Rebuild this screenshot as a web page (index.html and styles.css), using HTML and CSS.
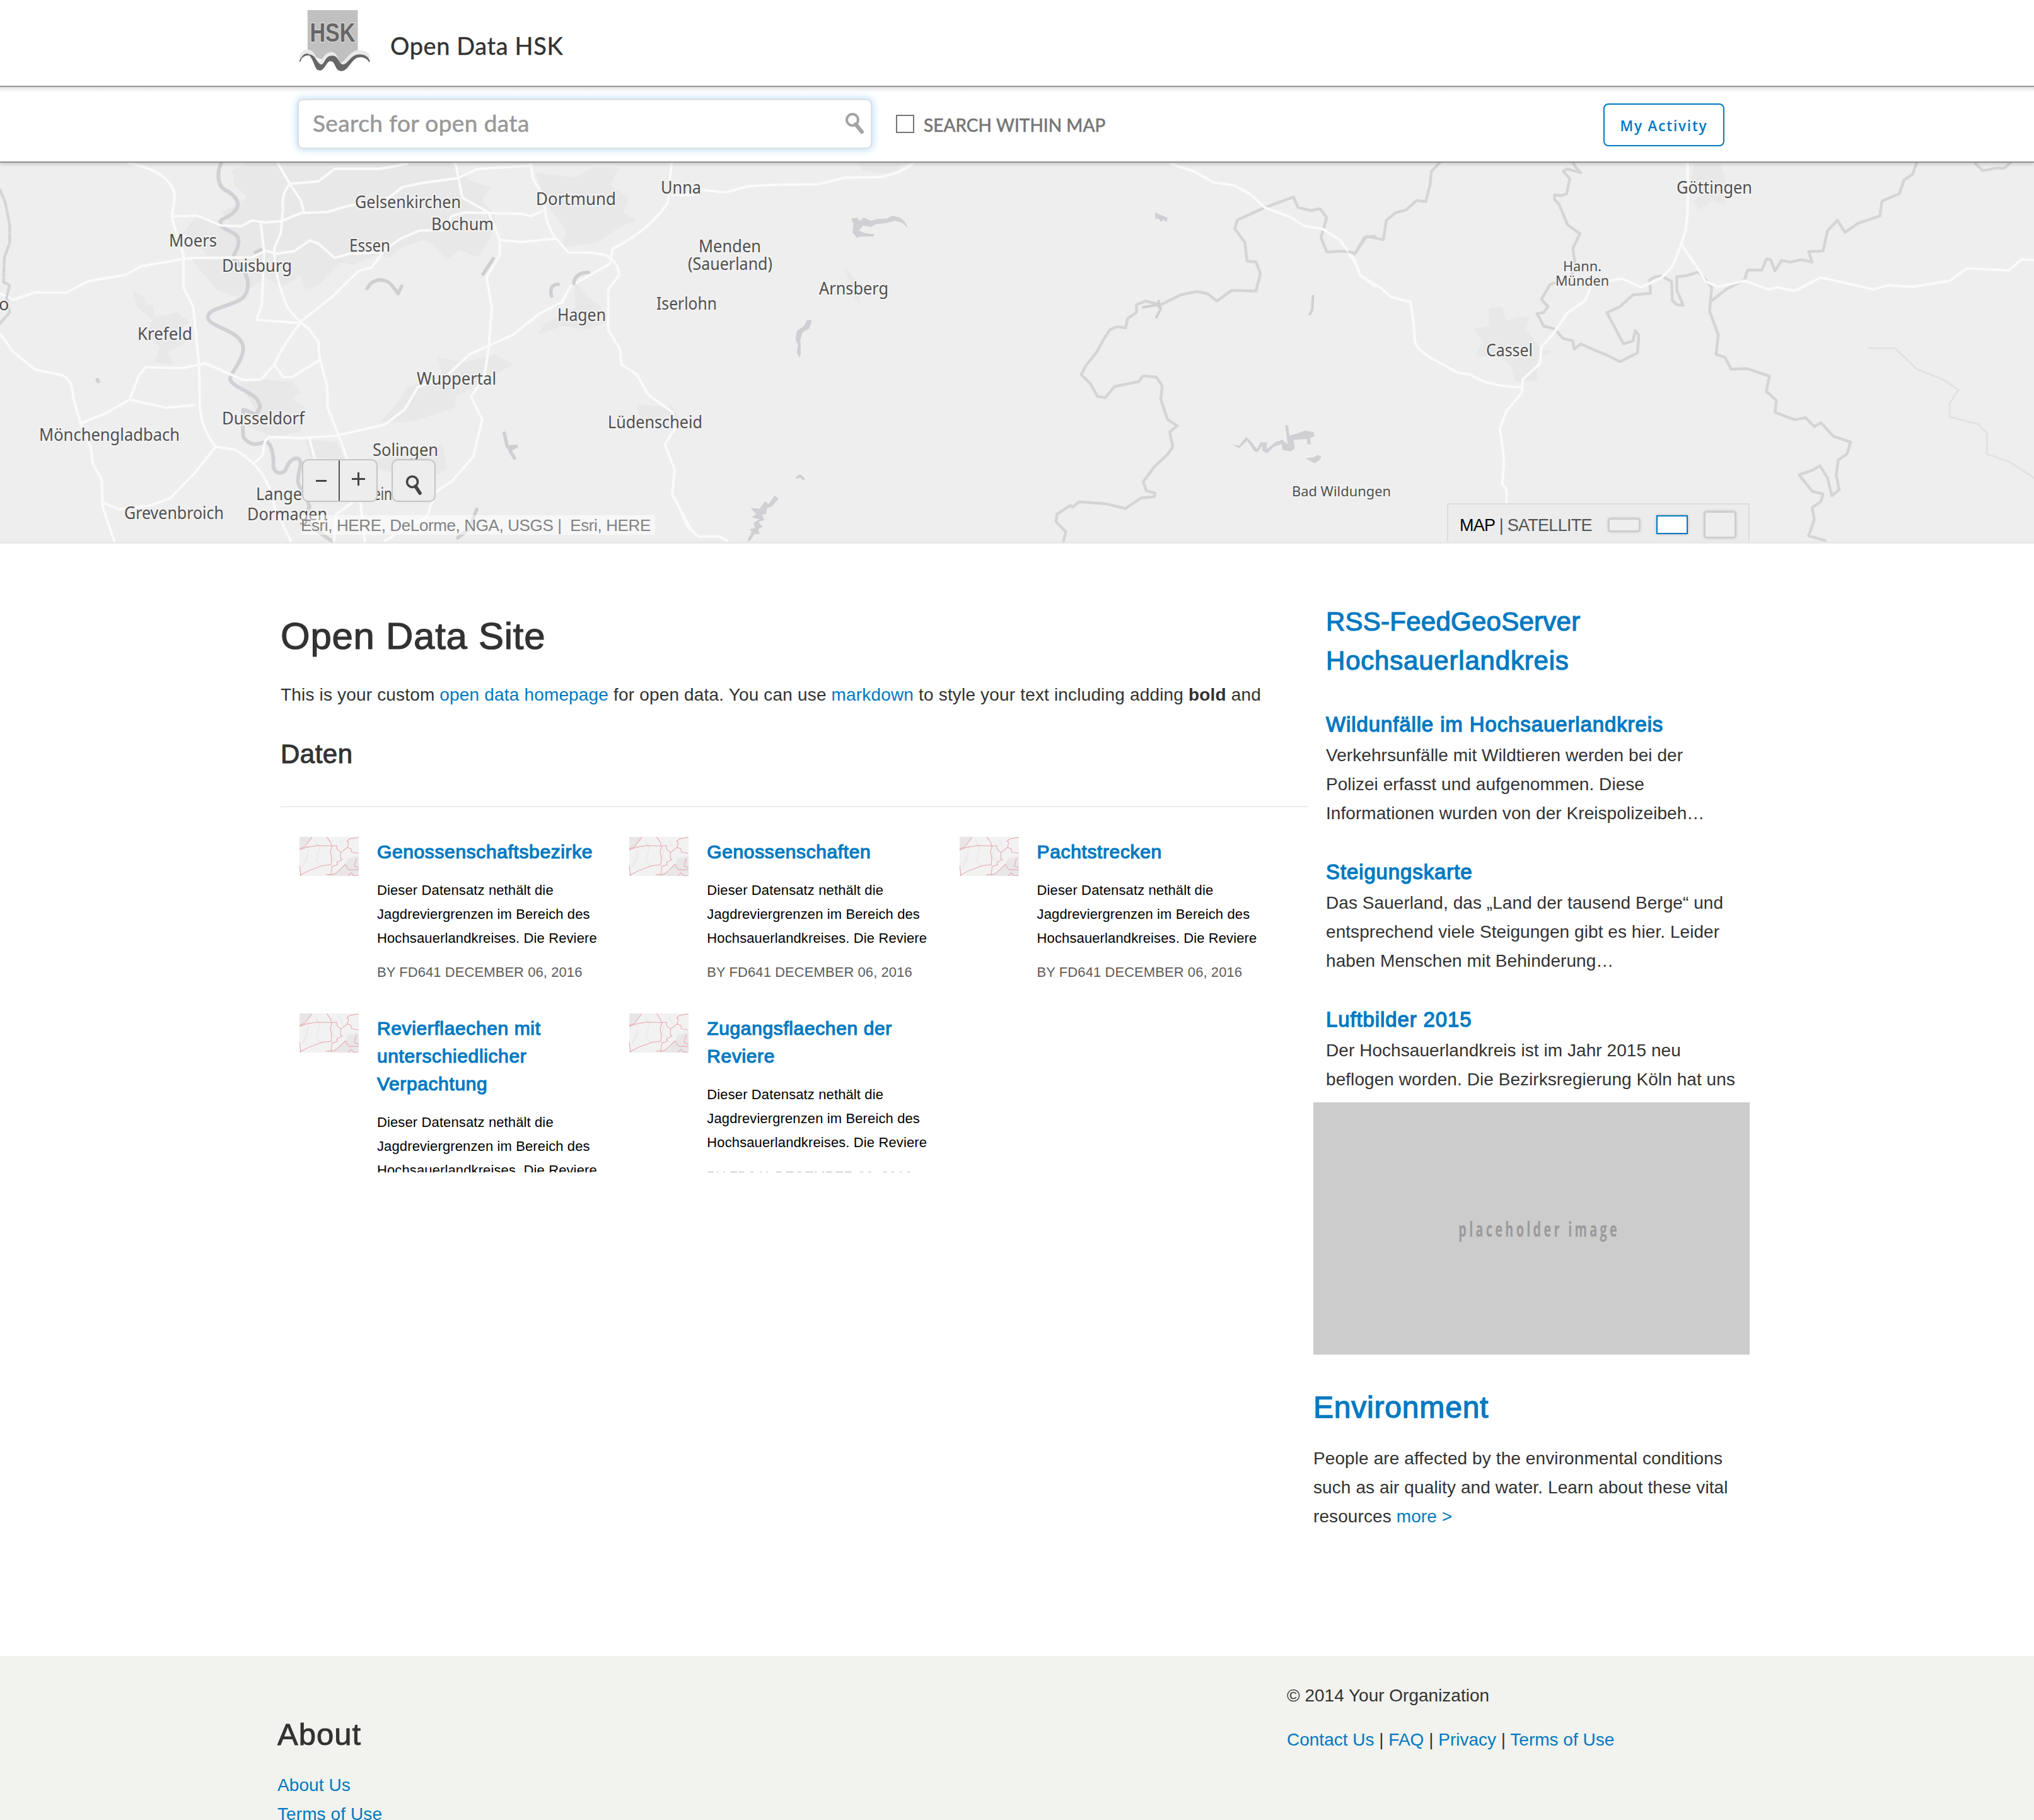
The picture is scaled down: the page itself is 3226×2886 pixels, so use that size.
FILE: index.html
```html
<!DOCTYPE html>
<html lang="en">
<head>
<meta charset="utf-8">
<title>Open Data HSK</title>
<link rel="stylesheet" href="styles.css">
</head>
<body>
<svg class="defs" aria-hidden="true">
  <symbol id="thumb" viewBox="46 48 280 185" preserveAspectRatio="none">
    <rect x="46" y="48" width="280" height="185" fill="#f3f2f2"/>
    <path d="M46 48H105L60 100L46 110ZM275 150L326 140V233H170L230 215L262 180ZM60 200L80 150L95 130" fill="#e8e6e7"/>
    <path d="M120 60L140 100L125 160L150 190M90 90L80 140L60 190M210 100L200 150L225 160M235 60L250 100" fill="none" stroke="#e6e4e6" stroke-width="3"/>
    <path d="M46 110L80 97L130 89L195 91L222 90L222 105L241 122L272 98L278 75L270 68L285 57L326 50M175 48L193 75L199 95L192 120L198 150L195 181L155 184L90 208L48 230M46 105L70 95L105 50M241 122L240 150L248 156L222 168L226 180L200 188L195 225L170 227M195 228L215 222L240 200L262 178L275 200L285 205L300 203L326 205M272 98L290 105L292 120L326 126M315 150L305 185L326 195M275 233L290 218L300 230L326 233M46 180L52 233" fill="none" stroke="#e5a4aa" stroke-width="3"/>
  </symbol>
</svg>

<header class="site-header">
  <svg class="logo" viewBox="0 0 112 97">
    <path d="M12.8 0H92.5V72L66 84L40 80L12.8 70Z" fill="#c0c0c0"/>
    <path d="M2 76C7 64 15 64 20 70C26 78 25 86 31 86C38 86 40 71 50 70C60 70 57 87 65 87C74 87 82 66 95 67C103 67 107 70 110 76" fill="none" stroke="#e9e9e9" stroke-width="7"/>
    <path d="M0.5 82C5 69 13 66 19 75C25 84 25 96 33 95C41 94 41 80 50 80C58 80 56 97 67 96C79 95 82 73 97 74C104 74 108 77 111 82C110 76 105 71 96 71C80 71 78 87 69 87C61 87 62 72 51 73C40 73 41 88 34 87C27 86 25 70 15 71C7 71 1 76 0.5 82Z" fill="#666" stroke="#666" stroke-width="1.5"/>
    <text x="16.5" y="50" textLength="72" lengthAdjust="spacingAndGlyphs" class="logo-text">HSK</text>
  </svg>
  <span class="site-title">Open Data HSK</span>
</header>

<div class="search-bar">
  <div class="search-box"><span>Search for open data</span>
    <svg class="search-icon" viewBox="0 0 30 34"><circle cx="11" cy="11" r="9" fill="none" stroke="#a3a3a3" stroke-width="4"/><path d="M16 18L26 30" stroke="#a3a3a3" stroke-width="6" stroke-linecap="round"/></svg>
  </div>
  <span class="checkbox"></span>
  <span class="within">SEARCH WITHIN MAP</span>
  <a class="activity">My Activity</a>
</div>

<section class="map">
  <svg class="map-canvas" viewBox="0 258 3226 604" preserveAspectRatio="none">
    <!-- western part: Rhine and Ruhr -->
    <g transform="translate(0 250) scale(.70153 .3954)">
      <g class="urban">
        <path d="M525 50L560 22H1020L1060 90L1110 120L1090 170L1120 230L1110 320L1080 400L1040 370L1010 410L980 350L960 330L920 350L880 400L850 390L800 430L770 420L720 510L690 530L680 470L640 520L600 480L540 560L490 530L430 400L470 390L415 300L440 240L520 260L500 220L560 160L530 110Z"/>
        <path d="M1210 60L1300 80L1340 40L1400 40L1380 110L1420 160L1410 220L1440 250L1400 280L1350 340L1270 360L1280 290L1240 200Z"/>
        <path d="M300 530L325 560L330 590L345 590L350 640L400 620L430 660L400 700L420 740L380 780L390 830L350 820L360 760L330 700L345 650L310 600Z"/>
        <path d="M540 900L600 890L660 900L680 940L660 970L690 1000L680 1100L620 1120L560 1080L580 1020Z"/>
        <path d="M990 800L1050 820L1120 790L1160 830L1130 860L1080 880V910L1030 960V1000L930 1060L860 1060L900 980L920 920L1000 870Z"/>
        <path d="M1300 500L1330 560L1360 600L1350 640L1370 660L1330 690L1270 675L1215 710L1230 670L1300 600Z"/>
        <path d="M1440 990L1520 1000L1540 1060L1450 1080ZM690 1130L760 1140L780 1210L700 1200ZM820 1230L900 1180L1000 1150L1010 1250L960 1300Z"/>
      </g>
      <g class="river"><path d="M500 22C490 60 490 120 515 135C545 170 550 210 500 250C490 290 530 290 538 320C545 370 520 390 530 410C560 450 570 520 550 560C530 595 470 600 470 640C470 680 545 690 550 760C550 820 520 860 520 890C530 930 585 940 588 1000L580 1030L550 1010Q548 1080 550 1120C570 1170 590 1140 605 1140Q620 1170 618 1240Q625 1280 645 1255C655 1200 680 1190 680 1230C670 1300 670 1310 690 1350L700 1400C680 1450 710 1490 750 1537"/></g>
      <g class="roads">
        <path d="M290 22C350 40 395 90 395 160C392 200 385 230 395 280L415 390V520L437 600L450 830L452 1000C455 1080 475 1130 487 1160L530 1170C570 1210 610 1280 620 1400L657 1537"/>
        <path d="M0 545L30 570L80 540L150 542L200 495L285 470L320 435L410 408L440 402L570 400L600 372L625 385L665 375L700 332L720 345L757 402L790 385L860 380"/>
        <path d="M395 235L445 232L500 272L545 275L570 252L600 260L635 255L680 222L740 218L790 192L880 160L910 118L960 100L1035 82L1080 45L1200 32"/>
        <path d="M628 22L655 105L680 170L687 220M655 105L720 95L757 45L860 45L920 25"/>
        <path d="M655 105Q635 150 640 200L635 300L620 365Q620 480 650 600Q670 650 700 690L720 740L722 800L740 920V1000L765 1110L785 1210"/>
        <path d="M590 265L597 380L592 590L580 650L675 663L750 560L810 455L840 440L870 370L905 325L950 292L1010 290L1020 235L1050 220L1180 225L1200 235L1225 215"/>
        <path d="M680 660Q640 750 620 830L590 890L550 892L465 825L410 845L330 840L315 870L293 970L240 1025L183 1065M293 970L375 1003L440 992M620 830L640 880H660L720 815"/>
        <path d="M0 705L30 780L80 850L140 872Q165 890 165 960L183 1070L205 1160L210 1230L230 1290L232 1400L258 1537M487 1160L440 1265L385 1365L340 1395L270 1410L235 1385"/>
        <path d="M1030 22L1045 160L1105 220L1130 330V390L1100 480L1112 600L1105 760L1095 880L1065 960L1090 1050L1070 1200L1020 1300L985 1340L965 1440L870 1537"/>
        <path d="M1130 330L1180 338L1255 325M1200 22L1205 85L1230 160Q1230 260 1255 320L1285 380L1340 382Q1370 385 1385 410Q1400 440 1400 470L1375 530V690L1402 770L1405 830L1440 870L1465 950L1520 1020L1525 1090L1503 1150L1525 1250L1520 1350L1565 1500"/>
        <path d="M1518 22L1510 180Q1470 290 1385 365L1380 425L1290 515L1270 580L1220 625L1160 710L1060 790L1010 875L945 920L915 1010L870 1070L760 1115L680 1125L610 1120Q595 1130 595 1190L572 1230"/>
        <path d="M755 1537L760 1430L795 1385M815 1385L825 1537M700 1130L712 1210M1520 150H1568"/>
      </g>
      <g class="borders"><path d="M0 130L12 180L22 270V340L10 400L8 500L22 510L15 560L22 620L0 665" stroke-dasharray="14 4"/></g>
      <g class="lakes">
        <path d="M830 525C840 490 865 475 885 510L900 545L908 515M1115 405L1092 467M1262 508Q1240 510 1247 555M1297 505Q1300 460 1330 460M1140 1105L1147 1160L1167 1158L1152 1172L1163 1205M1078 1410L1060 1490L1035 1525M590 370L577 380M220 890L222 898"/>
      </g>
    </g>
    <!-- centre: Sauerland -->
    <g transform="translate(1080 250) scale(.70153 .3954)">
      <path class="urban" d="M400 22H500L490 50L460 65L410 50ZM370 435L395 490L405 585L390 560Z"/>
      <g class="roads">
        <path d="M0 152L50 130L100 140L150 115L220 108L310 107L370 80L450 78Q500 60 525 22M0 1420L15 1480L40 1520L85 1518L105 1537"/>
      </g>
      <g class="borders"><path d="M865 1537L870 1500L848 1460L850 1430L880 1395L885 1402L900 1380L960 1388L1005 1407L1040 1365L1070 1360L1072 1345L1052 1335L1045 1300L1070 1240L1100 1190L1112 1160L1105 1100L1122 1075L1100 1050L1085 970L1088 915L1075 880L1045 875L1035 898L980 918L960 962L942 958L925 905L905 870L915 835L940 780L955 730L970 690L985 678L1005 683L1010 645L1030 620V590L1050 575L1085 590L1130 550L1165 537L1190 545L1212 575L1245 532L1300 535L1310 465L1300 418L1280 415L1275 340L1252 285L1258 250L1320 200L1385 158L1395 200L1425 212L1445 205L1460 240L1447 320L1460 378L1500 375L1525 383L1545 320L1568 315"/></g>
      <g class="roads"><path d="M1108 25L1160 55L1205 100L1250 110L1290 150L1320 200L1380 240L1410 275L1450 285L1490 330L1525 415L1535 470L1568 515"/></g>
      <g class="water">
        <path d="M385 245L398 240L405 255L413 240L430 253L445 246L465 245L478 233L495 240L505 255L514 282L500 262L485 252L465 262L440 267L430 278L412 272L402 292L415 302L438 308L435 316H405L398 322L388 300L390 265Z"/>
        <path d="M286 650L296 653L290 685L275 700L270 730L271 790L267 802L262 780L265 750L259 730L262 695L278 675Z"/>
        <path d="M212 1355L221 1368L205 1400L195 1405L192 1430H184L188 1455L175 1460L185 1480L175 1490L178 1510H166L156 1537H150L160 1500L155 1490L168 1485L164 1465L178 1450L160 1443L170 1430L158 1405L178 1408L190 1378L198 1390Z"/>
        <path d="M1246 1150L1262 1155L1278 1120L1292 1145L1302 1170L1310 1142H1325L1324 1170L1345 1140L1360 1132L1372 1150L1366 1075L1372 1072L1376 1115L1395 1105L1410 1095L1430 1100L1432 1118L1422 1125L1424 1150H1416V1128L1385 1132L1388 1165L1378 1178L1360 1172L1358 1148L1340 1160L1325 1186L1315 1175L1314 1155L1304 1180L1296 1178L1280 1134L1262 1165Z"/>
        <path d="M1412 1205L1430 1202L1440 1192L1448 1200L1444 1212L1432 1226Z"/>
        <path d="M1072 220L1085 230L1100 240L1098 258L1090 248L1086 258L1080 245H1072Z"/>
      </g>
      <g class="lakes thin">
        <path d="M1045 600L1080 590L1085 605L1075 640M1080 575V600M1429 555L1427 610L1422 628M263 1283L270 1276L277 1288"/>
      </g>
    </g>
    <!-- east: Cassel and Göttingen -->
    <g transform="translate(2140 130) scale(.69259 .4719)">
      <path class="urban" d="M320 760L350 755L360 800L390 790L412 790L405 830L440 900L465 905L430 930V1005H380L370 950L340 920H290L305 870L285 830L320 820ZM790 275H850L862 330V415L830 400L800 430L790 400L800 380L780 340Z"/>
      <g class="borders">
        <path d="M0 570L12 578L40 518L78 530L85 465L105 440L130 430L155 398L175 402L185 345L188 300L208 270M512 270L518 285L530 305L500 292L490 300L505 325L498 375L485 382L470 380L470 395L480 410L500 480L528 510L512 560L518 620L505 660L460 680L440 730L455 755L445 775L430 778L445 820L470 830L490 862L512 870L515 898L530 880L560 900L590 918L620 940L660 910L663 850L655 835L650 870L628 880L590 775L620 755L650 715L690 710L688 665L700 655L715 652L738 670L740 735L750 748L765 750L750 700L750 655L775 650L800 638L830 690L825 770L845 850L840 915L860 925L875 965L910 963L962 988L955 1040L978 1070L975 1110L1020 1135L1045 1128L1065 1158L1080 1145L1108 1190L1148 1210L1140 1250L1120 1270L1115 1320L1122 1370L1105 1390L1095 1330L1078 1290L1060 1305L1030 1320L1060 1375L1085 1385L1080 1410L1060 1430L1065 1470L1052 1525L1090 1541"/>
        <path d="M830 735L865 695L905 665L912 632L945 632L955 595L965 597L975 635L990 600L1010 605L1035 597L1060 605L1052 570L1085 568L1095 500L1118 465L1135 505L1165 475L1215 450L1220 400L1260 375L1270 330L1290 310L1300 270M1432 270L1450 298L1480 290L1500 290L1515 270"/>
        <path class="faint" d="M1190 895H1250L1300 965L1360 1000L1395 1035L1375 1080V1125L1440 1150L1460 1180V1250L1510 1275L1568 1330"/>
      </g>
      <g class="roads">
        <path d="M0 582Q15 600 25 650L70 690L95 722L140 740Q148 800 150 870Q155 900 190 930L250 978L275 982Q320 1025 395 1025M775 272V440L770 500L760 545L740 620L715 658L668 690L625 660L555 680L540 735L500 775L465 850L440 890L437 945L397 1000L395 1045L360 1105L345 1165L355 1275L350 1350L360 1370V1415M760 545L800 630L815 670L845 688L905 668L960 697L980 690L1020 702L1080 657L1200 697L1235 683L1290 688L1375 668L1415 626L1510 633L1540 596L1568 598"/>
      </g>
    </g>
    <g class="places">
      <text x="563" y="330" textLength="168" lengthAdjust="spacingAndGlyphs">Gelsenkirchen</text>
      <text x="850" y="325" textLength="127" lengthAdjust="spacingAndGlyphs">Dortmund</text>
      <text x="1048" y="307" textLength="64" lengthAdjust="spacingAndGlyphs">Unna</text>
      <text x="684" y="365" textLength="99" lengthAdjust="spacingAndGlyphs">Bochum</text>
      <text x="268" y="391" textLength="76" lengthAdjust="spacingAndGlyphs">Moers</text>
      <text x="554" y="399" textLength="65" lengthAdjust="spacingAndGlyphs">Essen</text>
      <text x="352" y="431" textLength="111" lengthAdjust="spacingAndGlyphs">Duisburg</text>
      <text x="1108" y="400" textLength="99" lengthAdjust="spacingAndGlyphs">Menden</text>
      <text x="1091" y="428" textLength="134" lengthAdjust="spacingAndGlyphs">(Sauerland)</text>
      <text x="1299" y="467" textLength="110" lengthAdjust="spacingAndGlyphs">Arnsberg</text>
      <text x="1041" y="491" textLength="96" lengthAdjust="spacingAndGlyphs">Iserlohn</text>
      <text x="884" y="509" textLength="77" lengthAdjust="spacingAndGlyphs">Hagen</text>
      <text x="218" y="539" textLength="87" lengthAdjust="spacingAndGlyphs">Krefeld</text>
      <text x="661" y="610" textLength="126" lengthAdjust="spacingAndGlyphs">Wuppertal</text>
      <text x="352" y="673" textLength="131" lengthAdjust="spacingAndGlyphs">Dusseldorf</text>
      <text x="62" y="699" textLength="223" lengthAdjust="spacingAndGlyphs">Mönchengladbach</text>
      <text x="591" y="723" textLength="104" lengthAdjust="spacingAndGlyphs">Solingen</text>
      <text x="406" y="793" textLength="73" lengthAdjust="spacingAndGlyphs">Lange</text>
      <text x="592" y="793" textLength="30" lengthAdjust="spacingAndGlyphs">ein</text>
      <text x="197" y="823" textLength="158" lengthAdjust="spacingAndGlyphs">Grevenbroich</text>
      <text x="392" y="825" textLength="127" lengthAdjust="spacingAndGlyphs">Dormagen</text>
      <text x="964" y="679" textLength="150" lengthAdjust="spacingAndGlyphs">Lüdenscheid</text>
      <text x="-2" y="492">o</text>
      <text x="2659" y="307" textLength="120" lengthAdjust="spacingAndGlyphs">Göttingen</text>
      <text x="2357" y="565" textLength="74" lengthAdjust="spacingAndGlyphs">Cassel</text>
      <g class="small">
        <text x="2049" y="787" textLength="157" lengthAdjust="spacingAndGlyphs">Bad Wildungen</text>
        <text x="2479" y="430" textLength="61" lengthAdjust="spacingAndGlyphs">Hann.</text>
        <text x="2467" y="453" textLength="85" lengthAdjust="spacingAndGlyphs">Münden</text>
      </g>
    </g>
  </svg>
  <div class="map-tools">
    <div class="zoom-group"><span class="zoom-out"><i></i></span><span class="zoom-in"><i></i></span></div>
    <div class="locate"><svg viewBox="0 0 30 34"><circle cx="11" cy="11" r="8.5" fill="none" stroke="#444" stroke-width="3.6"/><path d="M16 18L23 29" stroke="#444" stroke-width="5.5" stroke-linecap="round"/></svg></div>
  </div>
  <div class="attribution">Esri, HERE, DeLorme, NGA, USGS |&nbsp; Esri, HERE</div>
  <div class="basemap"><span class="modes"><b>MAP</b> | SATELLITE</span><i class="size low"></i><i class="size mid"></i><i class="size high"></i></div>
</section>

<main class="content">
  <div class="primary">
    <h1>Open Data Site</h1>
    <p class="intro">This is your custom <a>open data homepage</a> for open data. You can use <a>markdown</a> to style your text including adding <b>bold</b> and</p>
    <h2>Daten</h2>
    <div class="cards">
      <article class="card"><svg class="thumb"><use href="#thumb"/></svg><div>
        <h3>Genossenschaftsbezirke</h3>
        <p>Dieser Datensatz nethält die<br>Jagdreviergrenzen im Bereich des<br>Hochsauerlandkreises. Die Reviere</p>
        <small>BY FD641 DECEMBER 06, 2016</small></div></article>
      <article class="card"><svg class="thumb"><use href="#thumb"/></svg><div>
        <h3>Genossenschaften</h3>
        <p>Dieser Datensatz nethält die<br>Jagdreviergrenzen im Bereich des<br>Hochsauerlandkreises. Die Reviere</p>
        <small>BY FD641 DECEMBER 06, 2016</small></div></article>
      <article class="card"><svg class="thumb"><use href="#thumb"/></svg><div>
        <h3>Pachtstrecken</h3>
        <p>Dieser Datensatz nethält die<br>Jagdreviergrenzen im Bereich des<br>Hochsauerlandkreises. Die Reviere</p>
        <small>BY FD641 DECEMBER 06, 2016</small></div></article>
      <article class="card"><svg class="thumb"><use href="#thumb"/></svg><div>
        <h3>Revierflaechen mit<br>unterschiedlicher<br>Verpachtung</h3>
        <p>Dieser Datensatz nethält die<br>Jagdreviergrenzen im Bereich des<br>Hochsauerlandkreises. Die Reviere</p></div></article>
      <article class="card"><svg class="thumb"><use href="#thumb"/></svg><div>
        <h3>Zugangsflaechen der<br>Reviere</h3>
        <p>Dieser Datensatz nethält die<br>Jagdreviergrenzen im Bereich des<br>Hochsauerlandkreises. Die Reviere</p>
        <small class="fading">BY FD641 DECEMBER 06, 2016</small></div></article>
    </div>
  </div>
  <aside class="sidebar">
    <section class="feed">
      <h2>RSS-FeedGeoServer<br><span class="wide">Hochsauerlandkreis</span></h2>
      <h3>Wildunfälle im Hochsauerlandkreis</h3>
      <p>Verkehrsunfälle mit Wildtieren werden bei der<br>Polizei erfasst und aufgenommen. Diese<br>Informationen wurden von der Kreispolizeibeh…</p>
      <h3>Steigungskarte</h3>
      <p>Das Sauerland, das „Land der tausend Berge“ und<br>entsprechend viele Steigungen gibt es hier. Leider<br>haben Menschen mit Behinderung…</p>
      <h3>Luftbilder 2015</h3>
      <p>Der Hochsauerlandkreis ist im Jahr 2015 neu<br>beflogen worden. Die Bezirksregierung Köln hat uns</p>
    </section>
    <div class="placeholder"><span>placeholder image</span></div>
    <h2 class="topic">Environment</h2>
    <p class="topic-text">People are affected by the environmental conditions<br>such as air quality and water. Learn about these vital<br>resources <a>more &gt;</a></p>
  </aside>
</main>

<footer class="site-footer">
  <div class="about">
    <h2>About</h2>
    <a>About Us</a>
    <a>Terms of Use</a>
  </div>
  <div class="legal">
    <span>© 2014 Your Organization</span>
    <span><a>Contact Us</a> | <a>FAQ</a> | <a>Privacy</a> | <a>Terms of Use</a></span>
  </div>
</footer>
</body>
</html>
```
FILE: styles.css
```css
* { box-sizing: border-box; }
body {
  margin: 0;
  width: 3226px;
  height: 2886px;
  overflow: hidden;
  background: #fff;
  color: #323232;
  font: 28px/46px "Liberation Sans", Arial, sans-serif;
}
h1, h2, h3, p { margin: 0; font-weight: 400; }
a { color: #0079c1; text-decoration: none; }
i { font-style: normal; }
.defs { display: none; }

.site-header {
  display: flex;
  height: 136px;
  padding: 16px 0 0 475px;
}
.logo { width: 112px; height: 97px; flex: none; }
.logo-text { font: bold 42px "Liberation Sans", Arial, sans-serif; fill: #666; stroke: #d4d4d4; stroke-width: 3px; paint-order: stroke; }
.site-title {
  margin: 31px 0 0 32px;
  font: 38px/50px Lato, sans-serif;
  letter-spacing: .6px;
  -webkit-text-stroke: .4px;
}

.search-bar {
  position: relative;
  z-index: 1;
  display: flex;
  align-items: flex-start;
  height: 122px;
  padding: 19px 0 0 472px;
  border-top: 2px solid #999;
  border-bottom: 2px solid #8f8f8f;
  background: linear-gradient(#e2e2e2, #fff 8px);
  box-shadow: 0 2px 6px rgba(0, 0, 0, .18);
}
.search-box {
  display: flex;
  justify-content: space-between;
  width: 911px;
  height: 79px;
  padding: 11px 10px 0 22px;
  border: 2px solid #dedede;
  border-radius: 8px;
  background: #fff;
  box-shadow: 0 0 14px #a9d4f7;
  color: #999;
  font: 37px/50px Lato, sans-serif;
  letter-spacing: .4px;
  -webkit-text-stroke: .6px;
}
.search-icon { width: 30px; height: 34px; margin-top: 9px; }
.checkbox { width: 29px; height: 29px; margin: 25px 0 0 38px; border: 2px solid #757575; }
.within { margin: 22px 0 0 15px; color: #757575; font: 28px/38px Lato, sans-serif; letter-spacing: .05px; -webkit-text-stroke: .6px; }
.activity {
  width: 192px;
  height: 68px;
  margin: 7px 491px 0 auto;
  border: 2px solid #0079c1;
  border-radius: 8px;
  text-align: center;
  font: 600 22.5px/67px "Open Sans", sans-serif;
  letter-spacing: 1.8px;
}

.map { position: relative; height: 604px; background: #eee; border-bottom: 4px solid #e9e9e9; }
.map-canvas { display: block; width: 3226px; height: 604px; }
.urban { fill: #e8e8e8; }
.map-canvas path { vector-effect: non-scaling-stroke; stroke-linejoin: round; stroke-linecap: round; }
.roads path { fill: none; stroke: #fafafa; stroke-width: 4px; }
.borders path { fill: none; stroke: #d5d5d5; stroke-width: 4.5px; }
.borders .faint { stroke: #e2e2e2; stroke-width: 3px; }
.river path { fill: none; stroke: #d1d1d5; stroke-width: 6px; }
.lakes path { fill: none; stroke: #cfcfd3; stroke-width: 5.5px; }
.lakes.thin path { stroke-width: 4px; }
.water { fill: #cfcfd4; }
.places { font: 27px "Noto Sans", sans-serif; fill: #505050; stroke: #f2f2f2; stroke-width: 4px; paint-order: stroke; }
.small { font-size: 22px; }

.map-tools { position: absolute; left: 479px; top: 470px; display: flex; gap: 22px; }
.zoom-group, .locate { display: flex; height: 68px; border: 2px solid #c4c4c4; border-radius: 10px; background: #ededed; }
.zoom-group { width: 120px; }
.locate { width: 70px; padding: 23px 0 0 20px; }
.locate svg { width: 30px; height: 34px; }
.zoom-out, .zoom-in { display: flex; align-items: center; justify-content: center; width: 58px; }
.zoom-out { border-right: 2px solid #555; }
.zoom-out i { width: 17px; height: 3px; background: #444; }
.zoom-in i { width: 21px; height: 21px; margin-bottom: 5px; background: linear-gradient(#444, #444) center / 21px 3px no-repeat, linear-gradient(#444, #444) center / 3px 21px no-repeat; }
.attribution {
  position: absolute;
  left: 477px;
  top: 559px;
  width: 562px;
  height: 31px;
  background: rgba(255, 255, 255, .5);
  color: #838383;
  font-size: 26px;
  line-height: 33px;
  letter-spacing: -.38px;
  white-space: nowrap;
}
.basemap {
  position: absolute;
  left: 2295px;
  top: 540px;
  display: flex;
  align-items: center;
  width: 480px;
  height: 60px;
  padding: 6px 0 0 18px;
  border: 2px solid #dcdcdc;
  border-bottom: 0;
  background: #ececec;
  color: #555;
  font-size: 27px;
  white-space: nowrap;
}
.modes { width: 210px; padding-top: 2px; letter-spacing: -.72px; }
.basemap b { color: #000; font-weight: 400; }
.size { flex: none; border: 2px solid #ccc; border-radius: 3px; background: #eee; box-shadow: 0 0 4px #b0b0b0; }
.low { width: 50px; height: 21px; margin-left: 26px; }
.mid { width: 50px; height: 30px; margin-left: 26px; border-color: #0079c1; border-radius: 0; background: #fff; }
.high { width: 50px; height: 42px; margin-left: 26px; }

.content { display: grid; grid-template-columns: 1630px 692px; gap: 8px; height: 1764px; padding-left: 445px; white-space: nowrap; }
.primary { padding-top: 111px; }
h1 { font-size: 60px; line-height: 72px; letter-spacing: .72px; -webkit-text-stroke: 1.2px; }
.intro { margin-top: 34px; letter-spacing: .17px; }
.primary h2 { margin-top: 46px; padding-bottom: 57px; border-bottom: 2px solid #eee; font-size: 42px; line-height: 50px; letter-spacing: .5px; -webkit-text-stroke: 1px; }
.cards {
  display: grid;
  grid-template-columns: repeat(3, 523.3px);
  grid-auto-rows: 280px;
  height: 532px;
  margin-top: 47px;
  padding-left: 30px;
  overflow: hidden;
}
.card { display: flex; gap: 29px; color: #000; }
.thumb { width: 94px; height: 62px; flex: none; }
.card h3 { margin: 2px 0 20px; color: #0079c1; font-size: 30px; line-height: 44px; letter-spacing: .62px; -webkit-text-stroke: 1.2px; }
.card p { font-size: 22px; line-height: 38.2px; letter-spacing: .12px; }
.card small { display: block; margin-top: 15px; color: #5c5c5c; font-size: 22px; line-height: 38.2px; letter-spacing: .07px; }
.card .fading { opacity: .5; }

.feed { height: 886px; padding: 93px 0 0 20px; overflow: hidden; }
.feed h2 { margin-bottom: 47px; color: #0079c1; font-size: 42px; line-height: 62px; letter-spacing: .25px; -webkit-text-stroke: 1.2px; }
.feed .wide { letter-spacing: .8px; }
.feed h3 { margin-bottom: 3px; color: #0079c1; font-size: 33px; line-height: 46px; letter-spacing: .88px; -webkit-text-stroke: 1.3px; }
.feed p { margin-bottom: 47px; letter-spacing: .06px; }
.placeholder { display: flex; align-items: center; justify-content: center; height: 400px; background: #ccc; color: #9a9a9a; font: bold 33px "Open Sans", sans-serif; }
.placeholder span { margin-left: 24px; transform: scaleX(.6); letter-spacing: 7.2px; }
.topic { margin: 56px 0 30px; color: #0079c1; font-size: 48px; line-height: 56px; letter-spacing: .8px; -webkit-text-stroke: 1.3px; }
.topic-text { letter-spacing: .1px; }

.site-footer { display: flex; height: 260px; padding: 0 0 0 440px; background: #f2f2ee; white-space: nowrap; overflow: hidden; }
.about { display: flex; flex-direction: column; width: 1601px; padding-top: 96px; letter-spacing: .1px; }
.about h2 { margin-bottom: 30px; font-size: 49px; line-height: 56px; letter-spacing: 1px; -webkit-text-stroke: .9px; }
.legal { display: flex; flex-direction: column; gap: 24px; padding-top: 40px; }
```
